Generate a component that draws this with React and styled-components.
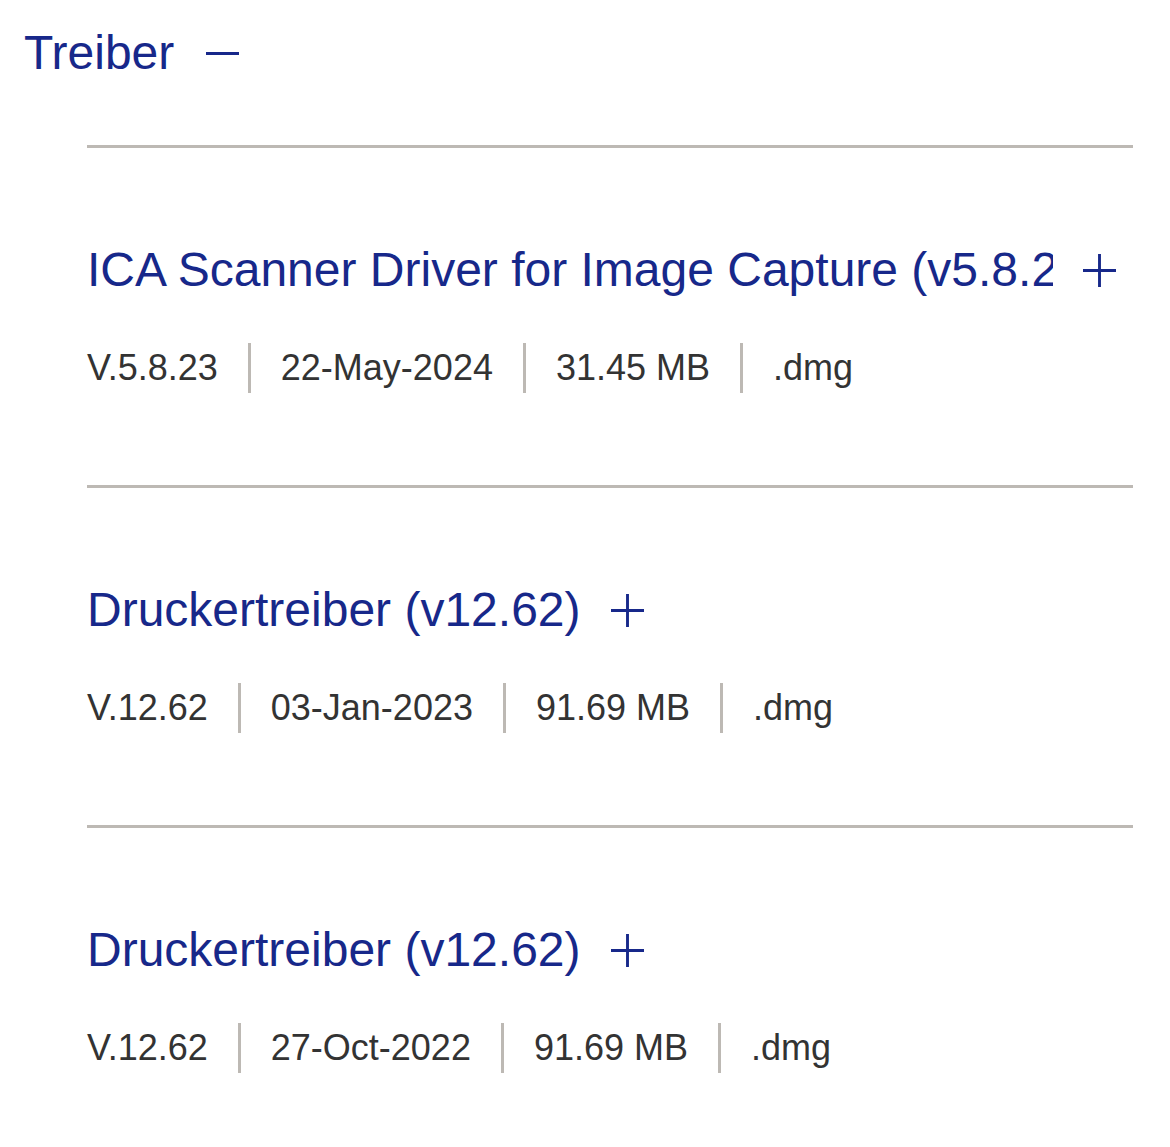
import styled, { createGlobalStyle } from 'styled-components';

const downloads = [
  {
    title: 'ICA Scanner Driver for Image Capture (v5.8.23)',
    version: 'V.5.8.23',
    date: '22-May-2024',
    size: '31.45 MB',
    ext: '.dmg',
  },
  {
    title: 'Druckertreiber (v12.62)',
    version: 'V.12.62',
    date: '03-Jan-2023',
    size: '91.69 MB',
    ext: '.dmg',
  },
  {
    title: 'Druckertreiber (v12.62)',
    version: 'V.12.62',
    date: '27-Oct-2022',
    size: '91.69 MB',
    ext: '.dmg',
  },
];

const Toggle = ({ open }) => (
  <ToggleIcon viewBox="0 0 34 34" aria-hidden="true">
    <line x1="0" y1="17" x2="34" y2="17" />
    {!open && <line x1="17" y1="0" x2="17" y2="34" />}
  </ToggleIcon>
);

const App = () => {
  return (
    <>
      <GlobalStyle />
      <Page>
        <Heading>
          <HeadingText>Treiber</HeadingText>
          <Toggle open />
        </Heading>

        <List>
          {downloads.map((item, i) => (
            <Item key={i}>
              <TitleRow>
                <Title>{item.title}</Title>
                <Toggle />
              </TitleRow>
              <Meta>
                <MetaCell>{item.version}</MetaCell>
                <MetaCell>{item.date}</MetaCell>
                <MetaCell>{item.size}</MetaCell>
                <MetaCell>{item.ext}</MetaCell>
              </Meta>
            </Item>
          ))}
        </List>
      </Page>
    </>
  );
};

export default App;

const GlobalStyle = createGlobalStyle`
  body {
    margin: 0;
    background: #ffffff;
    font-family: 'Liberation Sans', Arial, sans-serif;
  }
`;

const Page = styled.div`
  padding: 25px 37px 0 24px;
`;

const Heading = styled.div`
  display: flex;
  align-items: center;
  gap: 32px;

  height: 56px;

  color: #17288a;
`;

const HeadingText = styled.h2`
  margin: 0;

  font-size: 48px;
  font-weight: normal;
  line-height: 56px;
`;

const ToggleIcon = styled.svg`
  flex: none;

  width: 33px;
  height: 33px;

  stroke: #17288a;
  stroke-width: 3;
`;

const List = styled.div`
  margin: 64px 0 0 63px;
`;

const Item = styled.div`
  padding: 94px 0 92px;

  border-top: 3px solid #bdb9b4;
`;

const TitleRow = styled.div`
  display: flex;
  align-items: center;
  gap: 30px;

  padding-right: 16px;

  color: #17288a;
`;

const Title = styled.h3`
  margin: 0;
  max-width: 966px;

  overflow: hidden;
  white-space: nowrap;
  text-overflow: clip;

  font-size: 48px;
  font-weight: normal;
  line-height: 56px;
`;

const Meta = styled.div`
  display: flex;
  align-items: stretch;

  margin-top: 45px;

  color: #333333;
  font-size: 36px;
  line-height: 50px;
`;

const MetaCell = styled.span`
  padding: 0 30px;

  border-left: 3px solid #bdb9b4;

  &:first-child {
    padding-left: 0;
    border-left: none;
  }
`;
